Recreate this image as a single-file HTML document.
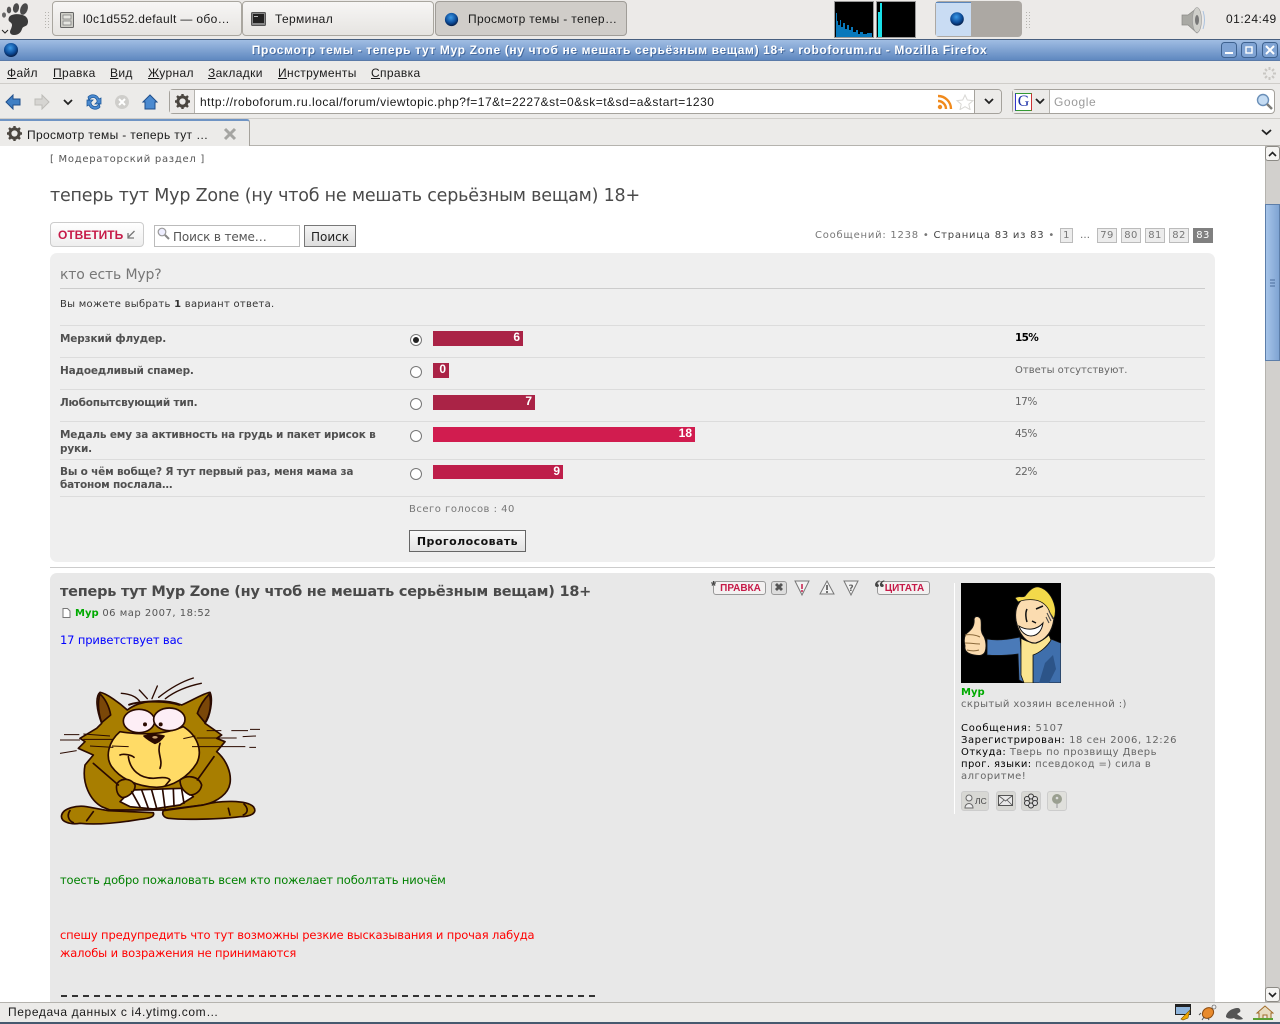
<!DOCTYPE html>
<html><head><meta charset="utf-8"><title>Просмотр темы</title>
<style>
html,body{margin:0;padding:0;width:1280px;height:1024px;overflow:hidden;background:#fff}
body{position:relative;font-family:"Liberation Sans",sans-serif;font-size:12px;color:#000}
.a{position:absolute}
.t{position:absolute;white-space:nowrap}
.d{font-family:"DejaVu Sans",sans-serif;font-size:10px;line-height:12px;letter-spacing:.5px}
.c{font-size:12px;line-height:14px;letter-spacing:.35px;color:#1a1a1a}
.b{font:11.5px/16px "DejaVu Sans",sans-serif;letter-spacing:-.14px}
u{text-decoration:underline}
.task{position:absolute;top:1px;height:35px;box-sizing:border-box;border:1px solid #a9a69f;border-radius:4px;background:linear-gradient(#f7f6f5,#e6e4e1)}
.pg{position:absolute;top:228px;height:13px;border:1px solid #bbb;background:#ececec;color:#777;font:10px/13px "DejaVu Sans",sans-serif;letter-spacing:.4px;text-align:center}
.row{position:absolute;left:60px;width:1145px;height:1px;background:#dcdcdc}
.q{font-family:"DejaVu Sans",sans-serif;font-size:10.5px;line-height:14px;font-weight:bold;color:#505050;letter-spacing:-.18px;position:absolute;left:60px;white-space:nowrap}
.rad{position:absolute;left:410px;width:10px;height:10px;border:1px solid #777;border-radius:50%;background:#fff}
.bar{position:absolute;left:433px;height:15px;box-sizing:border-box;color:#fff;font:bold 12px/13px "Liberation Sans",sans-serif;text-align:right;padding-right:3px}
.pc{position:absolute;left:1015px;font:10.5px/14px "DejaVu Sans",sans-serif;color:#666;letter-spacing:-.1px;white-space:nowrap}
.bt{position:absolute;box-sizing:border-box;height:14px;border:1px solid #999;border-radius:3px;background:#f3f1f1;color:#c61a48;font:bold 10px/13px "Liberation Sans",sans-serif;text-align:center}
.ic{position:absolute;box-sizing:border-box;border:1px solid #ccc;border-radius:3px;background:#d8d8d4}
</style></head><body>

<!-- top panel -->
<div class="a" style="left:0;top:0;width:1280px;height:39px;background:#eceae8"></div>
<svg class="a" style="left:0;top:0" width="32" height="38" viewBox="0 0 32 38">
<path d="M10 16c4-3 11-2 15 0 3 2 4 6 2 9-2 2-4 1-5 4-1 3-3 6-8 6-4 0-5-3-3-6 1-3 2-5-1-7-2-1-2-4 0-6z" fill="#3a3a3a"/>
<ellipse cx="24" cy="9" rx="3.6" ry="6" fill="#4a4a4a" transform="rotate(20 24 9)"/><ellipse cx="16" cy="8" rx="3" ry="4.8" fill="#4a4a4a" transform="rotate(10 16 8)"/><ellipse cx="9" cy="10" rx="2.2" ry="3.4" fill="#555"/><ellipse cx="4" cy="15" rx="2" ry="2.6" fill="#666"/>
<path d="M2 30l3 3 3-3" fill="none" stroke="#222" stroke-width="1"/></svg>
<svg class="a" style="left:45px;top:12px" width="4" height="16"><g fill="#b5b3ae"><rect y="0" width="1" height="1"/><rect x="3" y="0" width="1" height="1"/><rect y="3" width="1" height="1"/><rect x="3" y="3" width="1" height="1"/><rect y="6" width="1" height="1"/><rect x="3" y="6" width="1" height="1"/><rect y="9" width="1" height="1"/><rect x="3" y="9" width="1" height="1"/><rect y="12" width="1" height="1"/><rect x="3" y="12" width="1" height="1"/><rect y="15" width="1" height="1"/><rect x="3" y="15" width="1" height="1"/></g></svg>

<div class="task" style="left:52px;width:190px"></div>
<svg class="a" style="left:60px;top:12px" width="14" height="16"><rect x=".5" y=".5" width="13" height="15" rx="1" fill="#cfcfc8" stroke="#666"/><rect x="3" y="3" width="8" height="4" fill="#e5e5e0" stroke="#777" stroke-width=".7"/><rect x="3" y="9" width="8" height="4" fill="#e5e5e0" stroke="#777" stroke-width=".7"/></svg>
<div class="t c" style="left:83px;top:12px">l0c1d552.default — обо…</div>
<div class="task" style="left:242px;width:192px"></div>
<svg class="a" style="left:251px;top:12px" width="15" height="14"><rect x=".5" y=".5" width="14" height="13" rx="1" fill="#888" stroke="#555"/><rect x="2" y="2" width="11" height="9" fill="#222"/><rect x="3" y="4" width="4" height="1" fill="#bbb"/></svg>
<div class="t c" style="left:275px;top:12px">Терминал</div>
<div class="task" style="left:435px;width:192px;background:#d0cdc9;border-color:#a09d98"></div>
<svg class="a" style="left:444px;top:12px" width="15" height="15"><defs><radialGradient id="g" cx=".45" cy=".35" r=".65"><stop offset="0" stop-color="#3b9ae8"/><stop offset=".65" stop-color="#0c4a96"/><stop offset="1" stop-color="#061c44"/></radialGradient></defs><circle cx="7.5" cy="7.5" r="6.6" fill="url(#g)"/></svg>
<div class="t c" style="left:468px;top:12px">Просмотр темы - тепер…</div>

<div class="a" style="left:834px;top:1px;width:38px;height:35px;background:#000;border:1px solid #999"></div>
<svg class="a" style="left:835px;top:2px" width="38" height="35"><path d="M1 35V11h1v8h1v4h2v-5h1v7h2v-4h2v6h2v-4h2v5h2v-3h2v5h3v-2h2v4h2v-2h3v2h4v-1h5v4z" fill="#0878bb"/></svg>
<div class="a" style="left:876px;top:1px;width:38px;height:35px;background:#000;border:1px solid #999"></div>
<svg class="a" style="left:877px;top:2px" width="38" height="35"><rect x="1" y="10" width="2" height="25" fill="#19e0e8"/><rect x="3" y="1" width="2" height="34" fill="#19e0e8"/></svg>

<div class="a" style="left:935px;top:1px;width:87px;height:36px;border-radius:4px;background:#aca8a3"></div>
<div class="a" style="left:936px;top:2px;width:35px;height:34px;background:#c9dcf3;border-top:1px solid #5a86bd;box-sizing:border-box"></div>
<svg class="a" style="left:949px;top:11px" width="16" height="16"><circle cx="8" cy="8" r="6.8" fill="url(#g)"/></svg>
<svg class="a" style="left:1026px;top:12px" width="4" height="16"><g fill="#b5b3ae"><rect y="0" width="1" height="1"/><rect x="3" y="0" width="1" height="1"/><rect y="3" width="1" height="1"/><rect x="3" y="3" width="1" height="1"/><rect y="6" width="1" height="1"/><rect x="3" y="6" width="1" height="1"/><rect y="9" width="1" height="1"/><rect x="3" y="9" width="1" height="1"/><rect y="12" width="1" height="1"/><rect x="3" y="12" width="1" height="1"/><rect y="15" width="1" height="1"/><rect x="3" y="15" width="1" height="1"/></g></svg>
<svg class="a" style="left:1180px;top:4px" width="28" height="30"><path d="M2 11h6l9-7c2 7 2 19 0 25l-9-8H2z" fill="#a9a9a4" stroke="#8a8a86" stroke-width=".7"/><ellipse cx="17" cy="16" rx="4.5" ry="12.5" fill="#cfcfca" stroke="#999" stroke-width=".6"/><ellipse cx="17" cy="16" rx="2" ry="5" fill="#777"/><path d="M23 7c2 6 2 12 0 18" fill="none" stroke="#a9c1de"/></svg>
<div class="t" style="left:1226px;top:12px;font-size:12px;line-height:14px;letter-spacing:.5px;color:#1a1a1a">01:24:49</div>

<!-- title bar -->
<div class="a" style="left:0;top:39px;width:1280px;height:22px;background:linear-gradient(#a0bde3,#5f88c0);border-top:1px solid #475f7f;border-bottom:1px solid #5a7aa8;box-sizing:border-box"></div>
<svg class="a" style="left:3px;top:42px" width="16" height="16"><circle cx="8" cy="8" r="7" fill="url(#g)"/></svg>
<div class="t" style="left:0;top:43px;width:1239px;text-align:center;font:bold 12px/15px 'Liberation Sans',sans-serif;letter-spacing:.635px;color:#fff;text-shadow:1px 1px 0 #456a9f">Просмотр темы - теперь тут Мур Zone (ну чтоб не мешать серьёзным вещам) 18+ • roboforum.ru - Mozilla Firefox</div>
<svg class="a" style="left:1221px;top:42px" width="58" height="17"><g fill="#7fa3d3" stroke="#3f628f"><rect x=".5" y=".5" width="15" height="15" rx="3"/><rect x="20.5" y=".5" width="15" height="15" rx="3"/><rect x="41.5" y=".5" width="15" height="15" rx="3"/></g><rect x="4" y="10" width="8" height="2" fill="#fff"/><rect x="25" y="5" width="6" height="6" fill="none" stroke="#fff" stroke-width="1.4"/><path d="M45 4l8 8M53 4l-8 8" stroke="#fff" stroke-width="2"/></svg>

<!-- menu -->
<div class="a" style="left:0;top:61px;width:1280px;height:23px;background:#ecebe9;border-bottom:1px solid #cfcdc9;box-sizing:border-box"></div>
<div class="t c" style="left:7px;top:66px"><u>Ф</u>айл</div>
<div class="t c" style="left:53px;top:66px"><u>П</u>равка</div>
<div class="t c" style="left:110px;top:66px"><u>В</u>ид</div>
<div class="t c" style="left:148px;top:66px"><u>Ж</u>урнал</div>
<div class="t c" style="left:208px;top:66px"><u>З</u>акладки</div>
<div class="t c" style="left:278px;top:66px"><u>И</u>нструменты</div>
<div class="t c" style="left:371px;top:66px"><u>С</u>правка</div>
<svg class="a" style="left:1262px;top:66px" width="15" height="15"><g stroke="#c9c7c3" stroke-width="2"><path d="M7.5 1v3M7.5 11v3M1 7.5h3M11 7.5h3M3 3l2 2M10 10l2 2M12 3l-2 2M5 10l-2 2"/></g></svg>

<!-- nav -->
<div class="a" style="left:0;top:84px;width:1280px;height:35px;background:#ecebe9;border-bottom:1px solid #cfcdc9;box-sizing:border-box"></div>
<svg class="a" style="left:5px;top:94px" width="160" height="16">
<path d="M1 8l7-7v4h7v6H8v4z" fill="#3f7fc4" stroke="#1f4f8c"/>
<path d="M44 8l-7-7v4h-7v6h7v4z" fill="#d6d5d2" stroke="#bdbcb8"/>
<path d="M59 6l4 4 4-4" fill="none" stroke="#222" stroke-width="1.8"/>
<path d="M83 3a6.5 6.5 0 0 1 11 2l2-1v6h-6l2-2a3.5 3.5 0 0 0-8-1zM95 13a6.5 6.5 0 0 1-11-2l-2 1V6h6l-2 2a3.5 3.500 0 0 0 8 1z" fill="#4b8ad0" stroke="#1f5a9c" stroke-width=".8"/>
<circle cx="117" cy="8" r="7" fill="#cfcecb"/><path d="M114 5l6 6M120 5l-6 6" stroke="#fff" stroke-width="2"/>
<path d="M138 8l7-7 7 7h-2v7h-10V8z" fill="#4b8ad0" stroke="#1f4f8c"/>
</svg>
<div class="a" style="left:169px;top:89px;width:833px;height:25px;box-sizing:border-box;background:#fff;border:1px solid #a5a29c;border-radius:4px"></div>
<div class="a" style="left:170px;top:90px;width:25px;height:23px;background:#eceae8;border-right:1px solid #b5b3ae;box-sizing:border-box"></div>
<svg class="a" style="left:175px;top:94px" width="15" height="15"><circle cx="7.5" cy="7.5" r="4.6" fill="none" stroke="#4b4640" stroke-width="3"/><g stroke="#4b4640" stroke-width="2.4"><path d="M7.5 0v3M7.5 12v3M0 7.5h3M12 7.5h3M2 2l2 2M11 11l2 2M13 2l-2 2M4 11l-2 2"/></g></svg>
<div class="t c" style="left:200px;top:95px;letter-spacing:.5px">http://roboforum.ru.local/forum/viewtopic.php?f=17&amp;t=2227&amp;st=0&amp;sk=t&amp;sd=a&amp;start=1230</div>
<svg class="a" style="left:937px;top:94px" width="38" height="16"><circle cx="3" cy="13" r="2.2" fill="#f08a1d"/><path d="M1 7a8 8 0 0 1 8 8M1 2a13 13 0 0 1 13 13" fill="none" stroke="#f08a1d" stroke-width="2.4"/><path d="M28 1l2.300 5 5.700.6-4.200 3.600 1.300 5.400-5.100-2.900-5 2.900 1.200-5.400-4.200-3.600 5.700-.6z" fill="#fff" stroke="#d9d8d5"/></svg>
<div class="a" style="left:974px;top:90px;width:1px;height:23px;background:#a5a29c"></div>
<div class="a" style="left:975px;top:90px;width:26px;height:23px;background:#ecebe9;border-radius:0 3px 3px 0"></div>
<svg class="a" style="left:984px;top:98px" width="10" height="7"><path d="M1 1l4 4 4-4" fill="none" stroke="#222" stroke-width="1.8"/></svg>
<div class="a" style="left:1012px;top:89px;width:263px;height:25px;box-sizing:border-box;background:#fff;border:1px solid #a5a29c;border-radius:4px"></div>
<div class="a" style="left:1013px;top:90px;width:37px;height:23px;background:#ecebe9;border-right:1px solid #b5b3ae;box-sizing:border-box"></div>
<div class="a" style="left:1015px;top:93px;width:17px;height:18px;box-sizing:border-box;background:#fff;border:1px solid;border-color:#393 #c33 #393 #33c;font:16px/16px 'Liberation Serif',serif;color:#1b2fa8;text-align:center">G</div>
<svg class="a" style="left:1035px;top:98px" width="10" height="7"><path d="M1 1l4 4 4-4" fill="none" stroke="#222" stroke-width="1.8"/></svg>
<div class="t c" style="left:1054px;top:95px;color:#9a9a9a;letter-spacing:.6px">Google</div>
<svg class="a" style="left:1256px;top:93px" width="17" height="17"><circle cx="7" cy="7" r="5.500" fill="#c5dcf3" stroke="#6a8fb8" stroke-width="1.4"/><path d="M11 11l5 5" stroke="#7c7c78" stroke-width="2.400"/></svg>

<!-- tabs -->
<div class="a" style="left:0;top:119px;width:1280px;height:27px;background:#ecebe9;border-bottom:1px solid #b5b3ae;box-sizing:border-box"></div>
<div class="a" style="left:0;top:119px;width:250px;height:27px;box-sizing:border-box;background:#ecebe9;border-top:2px solid #6f94c4;border-right:1px solid #a5a29c;border-radius:0 3px 0 0"></div>
<svg class="a" style="left:7px;top:126px" width="15" height="15"><circle cx="7.5" cy="7.5" r="4.600" fill="none" stroke="#4b4640" stroke-width="3"/><g stroke="#4b4640" stroke-width="2.400"><path d="M7.500 0v3M7.500 12v3M0 7.500h3M12 7.500h3M2 2l2 2M11 11l2 2M13 2l-2 2M4 11l-2 2"/></g></svg>
<div class="t c" style="left:27px;top:128px">Просмотр темы - теперь тут …</div>
<svg class="a" style="left:223px;top:127px" width="14" height="14"><path d="M2 2l10 10M12 2L2 12" stroke="#a5a5a2" stroke-width="3"/></svg>
<svg class="a" style="left:1261px;top:129px" width="11" height="7"><path d="M1 1l4.500 4 4.500-4" fill="none" stroke="#222" stroke-width="1.800"/></svg>

<!-- page -->
<div class="t d" style="left:50px;top:154px;color:#555;letter-spacing:.72px">[ Модераторский раздел ]</div>
<div class="t" style="left:50px;top:185px;font:17.5px/22px 'DejaVu Sans',sans-serif;color:#4a4a4a;letter-spacing:-.2px">теперь тут Мур Zone (ну чтоб не мешать серьёзным вещам) 18+</div>

<div class="a" style="left:50px;top:222px;width:94px;height:25px;box-sizing:border-box;border:1px solid #ccc;border-radius:4px;background:linear-gradient(#fff,#eee)"></div>
<div class="t" style="left:58px;top:228px;font:bold 12px/14px 'Liberation Sans',sans-serif;color:#c61a48">ОТВЕТИТЬ</div>
<svg class="a" style="left:126px;top:230px" width="10" height="10"><path d="M8.500 1L2 7.500M2 3v5h6" fill="none" stroke="#777" stroke-width="1.300"/></svg>
<div class="a" style="left:154px;top:225px;width:146px;height:22px;box-sizing:border-box;border:1px solid #bbb;background:#fff"></div>
<svg class="a" style="left:157px;top:227px" width="13" height="13"><circle cx="5" cy="5" r="3.800" fill="#eef" stroke="#999" stroke-width="1.200"/><path d="M8 8l4 4" stroke="#888" stroke-width="2"/></svg>
<div class="t" style="left:173px;top:230px;font:12px/14px 'DejaVu Sans',sans-serif;letter-spacing:-.15px;color:#555">Поиск в теме…</div>
<div class="a" style="left:304px;top:225px;width:52px;height:22px;box-sizing:border-box;border:1px solid #777;background:linear-gradient(#f4f4f4,#ddd);font:12px/22px 'DejaVu Sans',sans-serif;text-align:center;color:#222">Поиск</div>

<div class="t d" style="left:815px;top:229px;color:#777;letter-spacing:.76px;top:230px">Сообщений: 1238 • <span style="color:#444">Страница 83 из 83</span> •</div>
<div class="pg" style="left:1060px;width:11px">1</div>
<div class="t d" style="left:1080px;top:230px;color:#666">…</div>
<div class="pg" style="left:1097px;width:18px">79</div>
<div class="pg" style="left:1121px;width:18px">80</div>
<div class="pg" style="left:1145px;width:18px">81</div>
<div class="pg" style="left:1169px;width:18px">82</div>
<div class="pg" style="left:1193px;width:18px;background:#808080;border-color:#808080;color:#fff">83</div>

<!-- poll -->
<div class="a" style="left:50px;top:253px;width:1165px;height:309px;background:#efefef;border-radius:7px"></div>
<div class="t" style="left:60px;top:267px;font:14px/17px 'DejaVu Sans',sans-serif;letter-spacing:-.15px;color:#777">кто есть Мур?</div>
<div class="a" style="left:60px;top:288px;width:1145px;height:1px;background:#ccc"></div>
<div class="t d" style="left:60px;top:299px;color:#333;letter-spacing:.27px">Вы можете выбрать <b>1</b> вариант ответа.</div>

<div class="row" style="top:325px"></div>
<div class="row" style="top:357px"></div>
<div class="row" style="top:389px"></div>
<div class="row" style="top:421px"></div>
<div class="row" style="top:459px"></div>
<div class="row" style="top:496px"></div>

<div class="q" style="top:332px">Мерзкий флудер.</div>
<div class="q" style="top:364px">Надоедливый спамер.</div>
<div class="q" style="top:396px">Любопытсвующий тип.</div>
<div class="q" style="top:428px">Медаль ему за активность на грудь и пакет ирисок в<br>руки.</div>
<div class="q" style="top:466px;line-height:13px">Вы о чём вобще? Я тут первый раз, меня мама за<br>батоном послала…</div>

<div class="rad" style="top:334px"></div><div class="a" style="left:413px;top:337px;width:6px;height:6px;border-radius:50%;background:#222"></div>
<div class="rad" style="top:366px"></div>
<div class="rad" style="top:398px"></div>
<div class="rad" style="top:430px"></div>
<div class="rad" style="top:468px"></div>

<div class="bar" style="top:331px;width:90px;background:#aa2346">6</div>
<div class="bar" style="top:363px;width:16px;background:#aa2346">0</div>
<div class="bar" style="top:395px;width:102px;background:#aa2346">7</div>
<div class="bar" style="top:427px;width:262px;background:#d11c4f">18</div>
<div class="bar" style="top:465px;width:130px;height:14px;background:#be1e4a">9</div>

<div class="pc" style="top:331px;color:#000;font-weight:bold;letter-spacing:-.7px">15%</div>
<div class="pc" style="top:364px;letter-spacing:0;font-size:10px">Ответы отсутствуют.</div>
<div class="pc" style="top:395px;letter-spacing:-.5px">17%</div>
<div class="pc" style="top:427px;letter-spacing:-.5px">45%</div>
<div class="pc" style="top:465px;letter-spacing:-.5px">22%</div>

<div class="t" style="left:409px;top:503px;font:10px/14px 'DejaVu Sans',sans-serif;color:#777;letter-spacing:.5px">Всего голосов : 40</div>
<div class="a" style="left:409px;top:530px;width:117px;height:22px;box-sizing:border-box;border:1px solid #666;background:linear-gradient(#fafafa,#e2e2e2);font:bold 11px/21px 'DejaVu Sans',sans-serif;letter-spacing:.45px;text-align:center;color:#111">Проголосовать</div>

<div class="a" style="left:50px;top:567px;width:1165px;height:1px;background:#ccc"></div>

<!-- post -->
<div class="a" style="left:50px;top:573px;width:1165px;height:429px;background:#e8e8e8;border-radius:7px 7px 0 0"></div>
<div class="t" style="left:60px;top:583px;font:bold 14.5px/18px 'DejaVu Sans',sans-serif;color:#4a4a4a;letter-spacing:-.235px">теперь тут Мур Zone (ну чтоб не мешать серьёзным вещам) 18+</div>
<svg class="a" style="left:62px;top:608px" width="9" height="10"><path d="M1 .5h4.500L8 3v6.500H1z" fill="#fff" stroke="#777"/></svg>
<div class="t d" style="left:75px;top:608px;color:#555"><b style="color:#00aa00;letter-spacing:0">Мур</b> 06 мар 2007, 18:52</div>
<div class="t b" style="left:60px;top:632px;color:#0000ff">17 приветствует вас</div>

<!-- buttons -->
<div class="bt" style="left:713px;top:581px;width:53px;padding-left:2px">ПРАВКА</div>
<div class="t" style="left:711px;top:579px;font:bold 13px/14px 'Liberation Sans',sans-serif;color:#444">*</div>
<div class="bt" style="left:771px;top:581px;width:16px;background:#ddd;color:#555;font-size:11px">✖</div>
<svg class="a" style="left:765px;top:579px" width="110" height="18"><g fill="#f2f2f2" stroke="#777"><path d="M30 2h14l-7 14z"/><path d="M62 2l7 13H55z"/><path d="M79 2h14l-7 14z"/></g><path d="M37 5v5M37 11v2" stroke="#c61a48" stroke-width="1.500"/><path d="M62 6v5M62 12v2" stroke="#444" stroke-width="1.500"/><text x="83.500" y="12" font-family="DejaVu Sans" font-size="9" font-weight="bold" fill="#666">?</text></svg>
<div class="bt" style="left:877px;top:581px;width:53px;padding-left:2px">ЦИТАТА</div>
<div class="t" style="left:874px;top:580px;font:bold 22px/16px 'Liberation Serif',serif;color:#444">“</div>

<!-- profile -->
<div class="a" style="left:954px;top:583px;width:1px;height:231px;background:#fff"></div>
<svg class="a" style="left:961px;top:583px" width="100" height="100" viewBox="0 0 100 100">
<rect width="100" height="100" fill="#000"/>
<path d="M26 56c10 2 24 0 33-2l3 40 2 6-6-3-1-26c-8 1-20 2-31 1z" fill="#4a7ab8" stroke="#111" stroke-width=".8"/>
<path d="M72 72c8-3 16-10 18-16l10 4v40H72z" fill="#3f6fac" stroke="#111" stroke-width=".8"/>
<path d="M84 80l8-8 3 14-7 14h-10z" fill="#2c5488"/>
<path d="M60 55c8 6 20 5 28-3l2 5c-4 7-12 13-18 15v28h-9l-3-8z" fill="#fbe590" stroke="#111" stroke-width=".8"/>
<path d="M55 38c-2-12 2-22 13-25 12-2 23 4 25 16 1 14-5 27-18 31-9 1-17-8-20-22z" fill="#fbdcb0" stroke="#111" stroke-width="1.200"/>
<path d="M54 15c4-3 7 0 10-2 5-7 10-10 14-9 8 2 14 10 16 20 1 5 0 9-1 12l-4-6c-2-7-8-12-15-13-6-1-13 0-17 2z" fill="#f3d94a" stroke="#111" stroke-width=".8"/>
<path d="M58 43c8 5 18 4 24-3-1 8-6 13-12 13-5 0-10-4-12-10z" fill="#fff" stroke="#111"/>
<path d="M66 26c-2 4-1 10 0 13M75 26l7-3M71 38l4 2" stroke="#111" stroke-width="1.500" fill="none"/><path d="M86 30l4 8M88 28l4 8M85 34l3 6" stroke="#444"/>
<path d="M13 36c1-4 6-3 7 1 1 6-1 10 2 15 3 4 4 12 2 17-2 4-6 4-11 3-6-1-10-4-9-9-1-4-1-9 1-12 3-3 9-6 8-15z" fill="#fbdcb0" stroke="#111"/>
<path d="M4 52c5-1 11 0 15 2M4 60c5 0 11 1 15 1M6 67c4 1 9 1 12 0" stroke="#8b6a3c" fill="none"/>
</svg>
<div class="t d" style="left:961px;top:687px;color:#00aa00;font-weight:bold;letter-spacing:0">Мур</div>
<div class="t d" style="left:961px;top:699px;color:#666;letter-spacing:.4px">скрытый хозяин вселенной :)</div>
<div class="t d" style="left:961px;top:723px;color:#666;letter-spacing:.72px"><span style="color:#000">Сообщения:</span> 5107</div>
<div class="t d" style="left:961px;top:735px;color:#666;letter-spacing:.56px"><span style="color:#000">Зарегистрирован:</span> 18 сен 2006, 12:26</div>
<div class="t d" style="left:961px;top:747px;color:#666;letter-spacing:.45px"><span style="color:#000">Откуда:</span> Тверь по прозвищу Дверь</div>
<div class="t d" style="left:961px;top:759px;color:#666;letter-spacing:.4px"><span style="color:#000">прог. языки:</span> псевдокод =) сила в</div>
<div class="t d" style="left:961px;top:771px;color:#666">алгоритме!</div>
<div class="ic" style="left:961px;top:791px;width:28px;height:20px"></div>
<svg class="a" style="left:963px;top:793px" width="12" height="16"><circle cx="6" cy="5" r="3" fill="#eee" stroke="#666"/><path d="M2 15c0-6 8-6 8 0z" fill="#eee" stroke="#666"/></svg>
<div class="t" style="left:975px;top:795px;font:8.5px/12px 'Liberation Sans',sans-serif;color:#444">ЛС</div>
<div class="ic" style="left:996px;top:791px;width:20px;height:20px"></div>
<svg class="a" style="left:998px;top:795px" width="16" height="12"><rect x=".5" y=".5" width="14" height="10" fill="#e8e8e8" stroke="#555"/><path d="M1 1l6.500 5L14 1M1 10l5-5M14 10l-5-5" fill="none" stroke="#555" stroke-width=".8"/></svg>
<div class="ic" style="left:1021px;top:791px;width:20px;height:20px"></div>
<svg class="a" style="left:1023px;top:793px" width="16" height="16"><g fill="#ddd" stroke="#333"><circle cx="8" cy="3.500" r="2.500"/><circle cx="8" cy="12.500" r="2.500"/><circle cx="4" cy="6" r="2.500"/><circle cx="12" cy="6" r="2.500"/><circle cx="4" cy="10" r="2.500"/><circle cx="12" cy="10" r="2.500"/></g></svg>
<div class="ic" style="left:1047px;top:791px;width:20px;height:20px;background:#e0e0dc"></div>
<svg class="a" style="left:1050px;top:793px" width="14" height="16"><circle cx="7" cy="6" r="5" fill="#9a9f90"/><circle cx="7" cy="5" r="1.300" fill="#ddd"/><path d="M6 11h2v4H6z" fill="#bbb"/></svg>

<!-- cat -->
<svg class="a" style="left:40px;top:660px" width="240" height="180" viewBox="0 0 720 540">
<g stroke="#2a0a00" stroke-width="5" stroke-linejoin="round">
<path d="M185 440C150 420 125 370 135 315L160 285 115 265 135 245 120 235 170 205 185 190C170 150 165 110 180 97 200 100 240 130 262 150 300 120 370 115 425 135 450 125 490 100 510 97 520 120 510 170 495 190L545 225 530 235 555 245 530 275C560 300 575 340 570 370 565 400 535 425 490 435L370 450 210 450Z" fill="#a87e00"/>
<path d="M65 465C70 445 110 435 140 440L205 452 340 458C345 470 330 475 300 478 230 490 170 495 120 490 90 495 60 485 65 465Z" fill="#a87e00"/>
<path d="M370 452L490 435C540 420 620 420 640 440 655 460 630 470 600 470 540 478 430 480 385 475 370 472 365 462 370 452Z" fill="#a87e00"/>
<path d="M180 102C172 125 175 160 185 188L212 165C208 140 195 115 180 102Z" fill="#7a4708"/>
<path d="M508 102C516 130 510 165 495 188L472 160C480 135 495 115 508 102Z" fill="#7a4708"/>
<path d="M240 215C205 245 195 290 215 320 240 355 290 380 350 382 400 380 445 350 470 310 490 270 470 225 430 200 370 225 300 225 240 215Z" fill="#ffdb66"/>
<path d="M240 425L275 390 430 385 460 410 420 435 340 447 270 440Z" fill="#fff"/>
<path d="M230 375C235 355 270 350 285 375 288 395 260 415 245 412 232 405 228 390 230 375Z" fill="#a87e00"/>
<path d="M420 360C435 345 475 345 485 375 482 395 465 405 450 405 430 395 420 380 420 360Z" fill="#a87e00"/>
<ellipse cx="297" cy="183" rx="47" ry="35" fill="#fdeef6"/>
<ellipse cx="388" cy="178" rx="47" ry="34" fill="#fdeef6"/>
<path d="M312 228Q340 220 372 228 360 245 345 250 325 240 312 228Z" fill="#2a0a00"/>
</g>
<ellipse cx="345" cy="232" rx="8" ry="4" fill="#c9a070"/>
<g fill="none" stroke="#2a0a00" stroke-width="5" stroke-linecap="round">
<path d="M360 250C350 280 370 300 360 325M240 285C250 280 275 285 282 292M265 290C270 330 300 355 340 355 360 352 385 350 390 360L375 378"/>
<path d="M275 395L300 440M305 390L325 445M335 390L350 445M368 390L375 445M400 388L402 438M425 388L432 430"/>
<path d="M160 310L235 375M522 290L472 360M90 452C80 465 85 482 100 488M160 455L140 482M565 445L570 465M612 432C625 445 625 458 610 465"/>
<path d="M244 100C270 102 290 110 300 126M298 90L322 116M352 78L336 116M356 112C390 85 425 65 460 54M376 116C410 90 445 78 484 70" stroke-width="4"/>
</g>
<path d="M265 135C290 125 370 118 420 135" fill="none" stroke="#2a0a00" stroke-width="6"/>
<circle cx="315" cy="193" r="6" fill="#2a0a00"/><circle cx="362" cy="193" r="6" fill="#2a0a00"/>
<g stroke="#2a0a00" stroke-width="3" fill="none">
<path d="M72 224h46M60 240h60M60 280l50-8M130 222l80 6M130 238h90M150 258l70 4M216 258l50 2M500 212h44M574 212h50M630 208h30M470 234h120M608 230l40-2M456 260h160M628 262h20M430 236l36-8"/></g>
</svg>

<div class="t b" style="left:60px;top:872px;color:#008000">тоесть добро пожаловать всем кто пожелает поболтать ниочём</div>
<div class="t b" style="left:60px;top:927px;color:#ff0000">спешу предупредить что тут возможны резкие высказывания и прочая лабуда</div>
<div class="t b" style="left:60px;top:945px;color:#ff0000">жалобы и возражения не принимаются</div>
<svg class="a" style="left:61px;top:995px" width="540" height="3"><line x1="0" y1="1" x2="537" y2="1" stroke="#333" stroke-width="2" stroke-dasharray="6 5"/></svg>

<!-- scrollbar -->
<div class="a" style="left:1265px;top:146px;width:15px;height:856px;background:#d2d0cd;border-left:1px solid #b5b3ae;box-sizing:border-box"></div>
<div class="a" style="left:1265px;top:146px;width:15px;height:15px;background:#f5f4f2;border:1px solid #8c8a85;border-radius:3px;box-sizing:border-box"></div>
<svg class="a" style="left:1268px;top:151px" width="9" height="6"><path d="M1 5l3.500-3.500L8 5" fill="none" stroke="#222" stroke-width="1.600"/></svg>
<div class="a" style="left:1265px;top:204px;width:15px;height:157px;box-sizing:border-box;border:1px solid #5d7ea9;background:linear-gradient(90deg,#a6c4e9,#7fa4d3)"></div>
<svg class="a" style="left:1269px;top:279px" width="7" height="8"><path d="M1 1h5M1 4h5M1 7h5" stroke="#4a6c9c"/></svg>
<div class="a" style="left:1265px;top:987px;width:15px;height:15px;background:#f5f4f2;border:1px solid #8c8a85;border-radius:3px;box-sizing:border-box"></div>
<svg class="a" style="left:1268px;top:992px" width="9" height="6"><path d="M1 1l3.500 3.500L8 1" fill="none" stroke="#222" stroke-width="1.600"/></svg>

<!-- status bar -->
<div class="a" style="left:0;top:1002px;width:1280px;height:20px;background:#ecebe9;border-top:1px solid #b5b3ae;box-sizing:border-box"></div>
<div class="a" style="left:0;top:1022px;width:1280px;height:2px;background:#46596f"></div>
<div class="t c" style="left:8px;top:1005px;letter-spacing:.62px">Передача данных с i4.ytimg.com…</div>
<svg class="a" style="left:1174px;top:1003px" width="100" height="18">
<rect x="1" y="1" width="16" height="11" fill="#222"/><rect x="2" y="4" width="14" height="7" fill="#8fb5dc"/><path d="M7 16l9-9-2 8-5 2z" fill="#f0a800" stroke="#7a5500" stroke-width=".6"/>
<ellipse cx="34" cy="10" rx="6" ry="5" fill="#e88a2c" stroke="#8a4a10" transform="rotate(-40 34 10)"/><circle cx="40" cy="4" r="2" fill="#eee" stroke="#444" stroke-width=".6"/><path d="M27 10l-2 2M30 14l-2 3M34 15l1 2" stroke="#555"/>
<path d="M52 14c0-5 6-9 12-9 2 0 3 3 2 4l-3 2c2 2 5 3 6 5-3 1-7 1-9-1-3 1-6 1-8-1z" fill="#555"/>
<path d="M91 3l-8 7h2v6h4v-4h4v4h4v-6h2z" fill="#e8dcc0" stroke="#a06b28"/><rect x="79" y="15" width="20" height="2" fill="#5aa032"/>
</svg>
</body></html>
